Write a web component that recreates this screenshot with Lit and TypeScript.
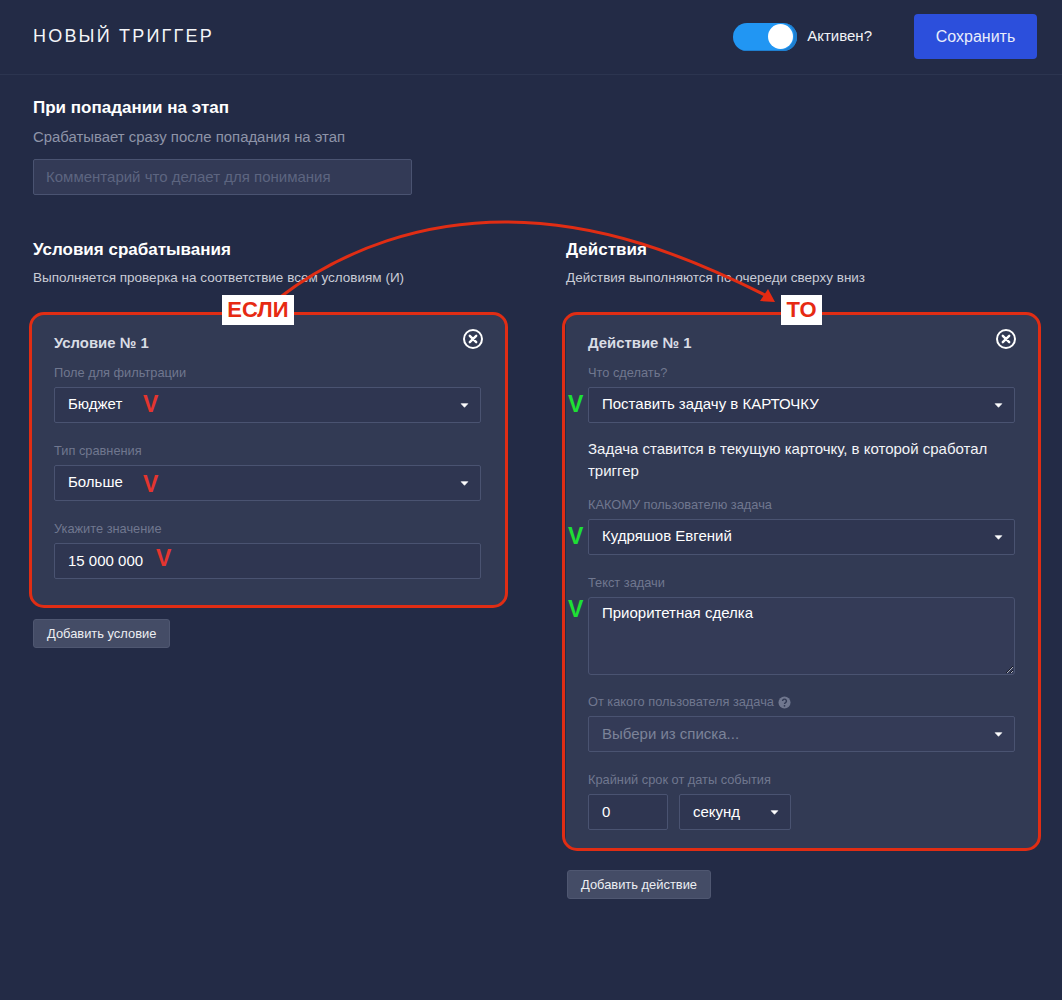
import { LitElement, html, css, svg } from "lit";
import { customElement } from "lit/decorators.js";

const caret = html`<svg class="caret" viewBox="0 0 10 6" width="9" height="5"><path d="M1 .8h8L5 5.2z" fill="#fff" stroke="#fff" stroke-width=".8" stroke-linejoin="round"/></svg>`;
const closeIcon = html`<svg class="close" viewBox="0 0 22 22" width="22" height="22"><circle cx="11" cy="11" r="9" fill="none" stroke="#fff" stroke-width="2"/><path d="M7.8 7.8l6.4 6.4M14.2 7.8l-6.4 6.4" stroke="#fff" stroke-width="2.4" stroke-linecap="round"/></svg>`;

@customElement("app-root")
export class AppRoot extends LitElement {
  static styles = css`
    :host { display: block; position: relative; min-height: 1000px; background: #232b46; color: #fff; font-family: "Liberation Sans", Arial, sans-serif; overflow: hidden; }
    * { box-sizing: border-box; }
    .header { height: 75px; border-bottom: 1px solid #2c3550; display: flex; align-items: center; padding: 0 25px 1px 33px; }
    .title { font-size: 18px; letter-spacing: 2.2px; flex: 1; color: #f4f5f8; }
    .toggle { width: 64px; height: 28px; border-radius: 14px; background: #2196f3; display: flex; align-items: center; justify-content: flex-end; padding: 0 4px 0 0; box-shadow: inset -3px -1px 0 #1f7fd0; }
    .knob { width: 25px; height: 25px; border-radius: 50%; background: #fff; }
    .active { font-size: 15px; margin: 0 42px 0 10px; color: #f2f3f6; position: relative; top: -1px; }
    .save { width: 123px; height: 45px; border-radius: 4px; background: #2c4fdc; color: #e9edfb; font-size: 16px; display: flex; align-items: center; justify-content: center; }
    .main { padding: 23px 24px 0 33px; }
    h2 { margin: 0; font-size: 17px; line-height: 20px; font-weight: 700; color: #fff; }
    .sub1 { margin: 9px 0 12px; font-size: 14.9px; line-height: 20px; color: #8e94a8; }
    .sub2 { margin: 8px 0 27px; font-size: 13.5px; line-height: 20px; color: #c9ccd6; }
    .comment { display: block; width: 379px; height: 36px; border: 1px solid #4a5371; border-radius: 2px; background: #333a56; padding: 0 12px 2px; font: 15px "Liberation Sans", Arial, sans-serif; color: #fff; outline: none; }
    .comment::placeholder { color: #5d6580; opacity: 1; }
    .cols { display: grid; grid-template-columns: 472px 472px; column-gap: 61px; margin-top: 45px; align-items: start; }
    .card { position: relative; background: #323a54; border-radius: 8px; padding: 18px 23px 19px 22px; }
    .card.left { margin-left: -1px; padding: 18px 24px 26px 22px; }
    .frame { position: absolute; inset: -3px -3px -2px -4px; border: 3px solid #e02d14; border-radius: 15px; pointer-events: none; }
    .left .frame { inset: -3px -3px -3px -3px; }
    .badge { position: absolute; top: -20px; height: 30px; background: #fff; color: #e62a12; font-weight: 700; font-size: 22px; display: flex; align-items: center; justify-content: center; z-index: 3; }
    .badge.if { left: 190px; width: 72px; }
    .badge.then { left: 215px; width: 41px; }
    .card-title { font-size: 14.9px; line-height: 20px; font-weight: 700; color: #d9dce4; margin-bottom: 11px; }
    .close { position: absolute; top: 13px; right: 21px; }
    .field { position: relative; margin-bottom: 19px; }
    .field:last-child { margin-bottom: 0; }
    .field.tight { margin-bottom: 18px; }
    label { display: flex; align-items: center; gap: 4px; font-size: 12.8px; line-height: 16px; color: #70778f; margin-bottom: 6px; padding-top: 1px; }
    .control { height: 36px; border: 1px solid #4a5371; border-radius: 2px; background: #2f3651; padding: 0 13px; display: flex; align-items: center; font-size: 15px; color: #fff; position: relative; }
    .control .val { padding-bottom: 2px; }
    .control .val.up { padding-bottom: 4px; }
    .control.light { background: #343b57; }
    .control.num { width: 80px; }
    .control.unit { width: 112px; }
    .caret { position: absolute; right: 11px; top: 15px; }
    .muted { color: #7c8399; }
    textarea { display: block; width: 100%; height: 78px; border: 1px solid #4a5371; border-radius: 3px; background: #343b57; padding: 6px 13px; font: 15px/17px "Liberation Sans", Arial, sans-serif; color: #fff; outline: none; resize: vertical; color-scheme: dark; }
    .row { display: flex; gap: 11px; }
    .note { margin: 15px 0 14px; font-size: 15px; line-height: 22px; color: #f3f4f7; }
    .add { display: inline-flex; align-items: center; height: 29px; padding: 0 13px; border-radius: 3px; background: #444c66; border: 1px solid #4f5771; color: #eceef2; font-size: 12.9px; }
    .add.a { margin-top: 14px; }
    .add.b { margin-top: 21px; margin-left: 1px; }
    .v { position: absolute; font-size: 23px; line-height: 24px; font-weight: 700; z-index: 3; }
    .red { color: #e5352f; }
    .green { color: #1ee034; left: -20px; }
    .arrow { position: absolute; left: 0; top: 0; width: 1062px; height: 1000px; pointer-events: none; z-index: 2; }
  `;

  render() {
    return html`
      <div class="header">
        <div class="title">НОВЫЙ ТРИГГЕР</div>
        <div class="toggle"><div class="knob"></div></div>
        <div class="active">Активен?</div>
        <div class="save">Сохранить</div>
      </div>
      <div class="main">
        <h2>При попадании на этап</h2>
        <div class="sub1">Срабатывает сразу после попадания на этап</div>
        <input class="comment" placeholder="Комментарий что делает для понимания" />
        <div class="cols">
          <div>
            <h2>Условия срабатывания</h2>
            <div class="sub2">Выполняется проверка на соответствие всем условиям (И)</div>
            <div class="card left">
              <div class="frame"></div>
              <div class="badge if">ЕСЛИ</div>
              ${closeIcon}
              <div class="card-title">Условие № 1</div>
              <div class="field">
                <label>Поле для фильтрации</label>
                <div class="control"><span class="val up">Бюджет</span>${caret}<span class="v red" style="left:88px;top:4px">V</span></div>
              </div>
              <div class="field">
                <label>Тип сравнения</label>
                <div class="control"><span class="val up">Больше</span>${caret}<span class="v red" style="left:88px;top:6px">V</span></div>
              </div>
              <div class="field">
                <label>Укажите значение</label>
                <div class="control"><span class="val">15 000 000</span><span class="v red" style="left:101px;top:2px">V</span></div>
              </div>
            </div>
            <div class="add a">Добавить условие</div>
          </div>
          <div>
            <h2>Действия</h2>
            <div class="sub2">Действия выполняются по очереди сверху вниз</div>
            <div class="card">
              <div class="frame"></div>
              <div class="badge then">ТО</div>
              ${closeIcon}
              <div class="card-title">Действие № 1</div>
              <div class="field" style="margin-bottom:0">
                <label>Что сделать?</label>
                <div class="control"><span class="val up">Поставить задачу в КАРТОЧКУ</span>${caret}</div>
                <span class="v green" style="top:28px">V</span>
              </div>
              <div class="note">Задача ставится в текущую карточку, в которой сработал триггер</div>
              <div class="field">
                <label>КАКОМУ пользователю задача</label>
                <div class="control"><span class="val up">Кудряшов Евгений</span>${caret}</div>
                <span class="v green" style="top:28px">V</span>
              </div>
              <div class="field tight">
                <label>Текст задачи</label>
                <textarea>Приоритетная сделка</textarea>
                <span class="v green" style="top:23px">V</span>
              </div>
              <div class="field">
                <label>От какого пользователя задача
                  <svg viewBox="0 0 14 14" width="13" height="13"><circle cx="7" cy="7" r="6.5" fill="#70778f"/><path d="M4.9 5.4a2.1 2 0 1 1 3.2 1.7c-.7.4-1.1.8-1.1 1.5" fill="none" stroke="#323a54" stroke-width="1.5"/><circle cx="7" cy="10.6" r=".95" fill="#323a54"/></svg>
                </label>
                <div class="control light"><span class="val muted">Выбери из списка...</span>${caret}</div>
              </div>
              <div class="field">
                <label>Крайний срок от даты события</label>
                <div class="row">
                  <div class="control num"><span class="val">0</span></div>
                  <div class="control unit"><span class="val">секунд</span>${caret}</div>
                </div>
              </div>
            </div>
            <div class="add b">Добавить действие</div>
          </div>
        </div>
      </div>
      <svg class="arrow" viewBox="0 0 1062 1000">
        ${svg`<path d="M279 298C345 247 425 222 505 222C600 222 685 255 765 295" fill="none" stroke="#e02d14" stroke-width="3"/>
        <path d="M775 302L760 301L768 289z" fill="#e62a12"/>`}
      </svg>
    `;
  }
}
